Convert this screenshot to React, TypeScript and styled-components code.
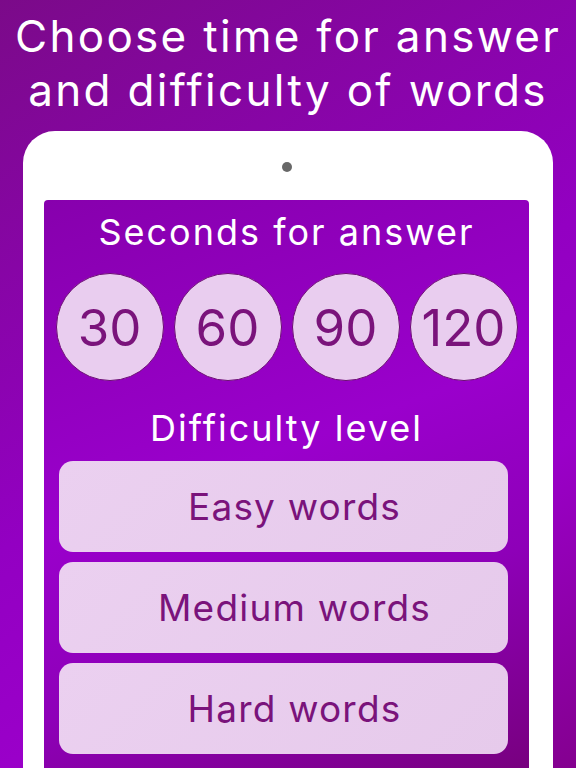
import styled, { createGlobalStyle } from 'styled-components';

const GlobalStyle = createGlobalStyle`
  html, body {
    margin: 0;
    padding: 0;
  }
  body {
    font-family: Inter, "Noto Sans", sans-serif;
  }
`;

const Page = styled.div`
  width: 576px;
  height: 768px;
  overflow: hidden;
  display: flex;
  flex-direction: column;
  align-items: center;
  background: linear-gradient(150deg, #7b0a89 0%, #9300c2 50%, #9a00c9 70%, #84008f 100%);
`;

const Title = styled.h1`
  margin: 0;
  padding-top: 9px;
  font-size: 44px;
  line-height: 54px;
  font-weight: 400;
  color: #ffffff;
  text-align: center;
  letter-spacing: 2.3px;
`;

const Tablet = styled.div`
  margin-top: 14px;
  width: 530px;
  flex: 1;
  box-sizing: border-box;
  padding: 0 24px 0 21px;
  display: flex;
  flex-direction: column;
  background: #ffffff;
  border-radius: 32px 32px 0 0;
`;

const Bezel = styled.div`
  height: 69px;
  display: flex;
  justify-content: center;
  align-items: center;
  padding-top: 2px;
  box-sizing: border-box;
`;

const Camera = styled.span`
  width: 10px;
  height: 10px;
  border-radius: 50%;
  background: #686868;
`;

const Screen = styled.div`
  flex: 1;
  display: flex;
  flex-direction: column;
  align-items: center;
  padding-top: 10px;
  border-radius: 4px 4px 0 0;
  background: linear-gradient(160deg, #8700ad 0%, #9a00cc 45%, #8e00b8 70%, #78007f 100%);
`;

const Heading = styled.h2<{ $gap?: number }>`
  margin: ${p => p.$gap ?? 0}px 0 0;
  font-size: 36px;
  line-height: 44px;
  font-weight: 400;
  color: #ffffff;
  text-align: center;
  letter-spacing: 2px;
`;

const Circles = styled.div`
  margin-top: 19px;
  display: flex;
  gap: 10px;
`;

const Circle = styled.button`
  width: 108px;
  height: 108px;
  padding: 0;
  border-radius: 50%;
  border: 1px solid #6c0b74;
  background: #e9cdef;
  color: #7a137b;
  font-family: inherit;
  font-size: 51px;
  font-weight: 400;
  display: flex;
  justify-content: center;
  align-items: center;
`;

const Levels = styled.div`
  margin-top: 11px;
  align-self: flex-start;
  margin-left: 15px;
  width: 449px;
  display: flex;
  flex-direction: column;
  gap: 10px;
`;

const Level = styled.button`
  height: 91px;
  padding: 0 0 0 22px;
  border: none;
  border-radius: 14px;
  background: linear-gradient(135deg, #ebd0f0 0%, #e6caeb 100%);
  color: #7a137b;
  font-family: inherit;
  font-size: 37px;
  font-weight: 400;
  letter-spacing: 1.2px;
  display: flex;
  justify-content: center;
  align-items: center;
`;

const seconds = [30, 60, 90, 120];
const levels = ['Easy words', 'Medium words', 'Hard words'];

export default function App() {
  return (
    <>
      <GlobalStyle />
      <Page>
        <Title>
          Choose time for answer
          <br />
          and difficulty of words
        </Title>
        <Tablet>
          <Bezel>
            <Camera />
          </Bezel>
          <Screen>
            <Heading>Seconds for answer</Heading>
            <Circles>
              {seconds.map(s => (
                <Circle key={s}>{s}</Circle>
              ))}
            </Circles>
            <Heading $gap={25}>Difficulty level</Heading>
            <Levels>
              {levels.map(l => (
                <Level key={l}>{l}</Level>
              ))}
            </Levels>
          </Screen>
        </Tablet>
      </Page>
    </>
  );
}
